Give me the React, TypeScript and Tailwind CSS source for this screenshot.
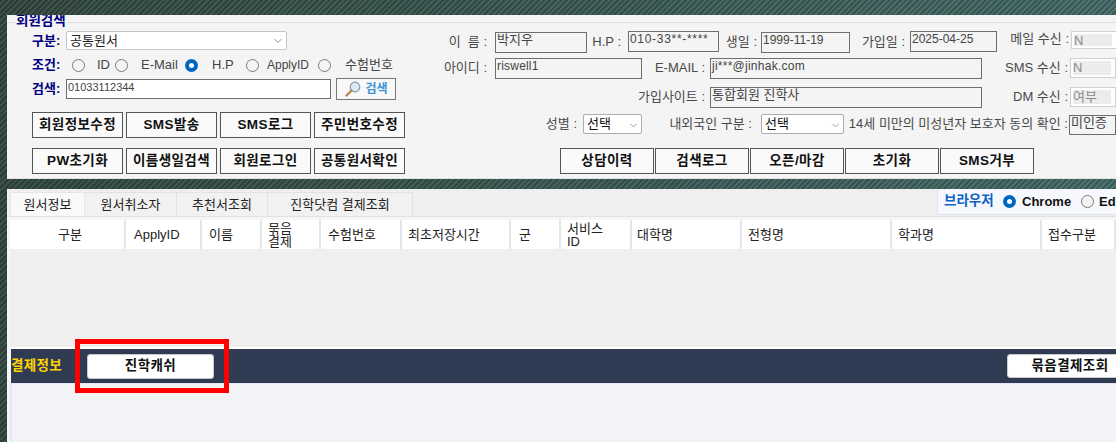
import { ChevronDown } from 'lucide-react';
import type { ReactNode } from 'react';

const FONT = 'font-["Liberation_Sans","Noto_Sans_CJK_KR",sans-serif]';

const Label = ({ className, children }: { className: string; children: ReactNode }) => (
    <div className={`shrink-0 whitespace-nowrap pt-[2px] text-right text-[13px] leading-[16px] text-[#4a4a4a] ${className}`}>{children}</div>
);

const Box = ({ className, children }: { className: string; children: ReactNode }) => (
    <div className={`shrink-0 overflow-hidden whitespace-nowrap border border-[#6e6e6e] pl-[1px] leading-[14px] text-[#444] ${className}`}>{children}</div>
);

const OffBox = ({ className, children }: { className: string; children: ReactNode }) => (
    <div className={`w-[46px] shrink-0 border border-[#cfcfcf] bg-white py-[2px] pl-[2px] ${className}`}>
        <div className="h-full w-[38px] bg-[#ececec] text-[13px] leading-[14px] text-[#8a8a8a]">{children}</div>
    </div>
);

const SmallSelect = ({ className, children }: { className: string; children: ReactNode }) => (
    <div className={`flex shrink-0 items-start justify-between rounded-[2px] border border-[#adadad] bg-white pl-[3px] pr-[2px] text-[13px] leading-[17px] text-[#111] ${className}`}>
        {children}
        <ChevronDown className="mt-[5px] h-[11px] w-[11px] text-[#777]" strokeWidth={1.5} />
    </div>
);

const ActionButton = ({ className, children }: { className: string; children: ReactNode }) => (
    <div className={`flex h-[26px] shrink-0 items-center justify-center border border-[#555] bg-[#fafafa] text-[13.5px] font-bold tracking-[0.4px] text-[#111] ${className}`}>
        {children}
    </div>
);

const Radio = ({ on = false, className = '' }: { on?: boolean; className?: string }) =>
    on ? (
        <span className={`flex h-[13px] w-[13px] shrink-0 items-center justify-center rounded-full bg-[#0067c0] ${className}`}>
            <span className="h-[5px] w-[5px] rounded-full bg-white" />
        </span>
    ) : (
        <span className={`h-[13px] w-[13px] shrink-0 rounded-full border border-[#7a7a7a] bg-[#f4f4f4] ${className}`} />
    );

const Navy = ({ children }: { children: ReactNode }) => <div className="w-[34px] shrink-0 text-[13px] font-bold leading-[16px] text-[#000080]">{children}</div>;

const COLUMNS: { name: ReactNode; cls: string }[] = [
    { name: '구분', cls: 'justify-center pl-[6px]' },
    { name: 'ApplyID', cls: 'pl-[8px] text-[12px]' },
    { name: '이름', cls: 'pl-[7px]' },
    { name: <>묶음<br />결제</>, cls: 'pl-[6px]' },
    { name: '수험번호', cls: 'pl-[7px]' },
    { name: '최초저장시간', cls: 'pl-[6px]' },
    { name: '군', cls: 'pl-[8px]' },
    { name: <>서비스<br />ID</>, cls: 'pl-[6px]' },
    { name: '대학명', cls: 'pl-[5px]' },
    { name: '전형명', cls: 'pl-[6px]' },
    { name: '학과명', cls: 'pl-[6px]' },
    { name: '접수구분', cls: 'pl-[6px]' },
];

const App = () => {
    return (
        <div className={`relative h-[442px] w-[1116px] overflow-hidden bg-[repeating-linear-gradient(135deg,rgba(0,0,0,0.16)_0px,rgba(0,0,0,0.16)_2px,rgba(255,255,255,0.05)_2px,rgba(255,255,255,0.05)_4px),linear-gradient(90deg,#32483f,#456b68)] pl-[7px] pt-[15px] ${FONT}`}>
            {/* 회원검색 */}
            <div className="relative h-[164px] w-[1109px] overflow-hidden border-b border-[#e2e2e2] bg-[#f4f4f4]">
                <div className="absolute left-[9px] top-[-1px] bg-[#f4f4f4] pr-[2px] text-[13.5px] font-bold leading-[14px] text-[#000080]">회원검색</div>
                <div className="mt-[7px] flex border-t border-[#dddddd] pt-[8px]">
                    {/* left */}
                    <div className="w-[413px] shrink-0 pl-[25px]">
                        <div className="flex items-center">
                            <Navy>구분:</Navy>
                            <div className="flex h-[19px] w-[221px] items-center justify-between rounded-[2px] border border-[#c4c4c4] bg-white pl-[3px] pr-[2px] text-[13px] text-[#222]">
                                공통원서
                                <ChevronDown className="h-[12px] w-[12px] text-[#666]" strokeWidth={1.5} />
                            </div>
                        </div>
                        <div className="mt-[6px] flex h-[18px] items-center whitespace-nowrap text-[13px] text-[#444]">
                            <Navy>조건:</Navy>
                            <Radio className="ml-[6px]" />
                            <span className="ml-[12px] w-[18px]">ID</span>
                            <Radio />
                            <span className="ml-[13px] w-[37px]">E-Mail</span>
                            <Radio on className="ml-[7px]" />
                            <span className="ml-[14px] w-[19px]">H.P</span>
                            <Radio className="ml-[15px]" />
                            <span className="ml-[8px] w-[40px] text-[12px]">ApplyID</span>
                            <Radio className="ml-[11px]" />
                            <span className="ml-[14px]">수험번호</span>
                        </div>
                        <div className="mt-[4px] flex h-[22px] items-center">
                            <Navy>검색:</Navy>
                            <div className="h-[20px] w-[265px] border border-[#6e6e6e] bg-white pl-[1px] text-[11px] leading-[15px] text-[#444]">01033112344</div>
                            <div className="ml-[5px] flex h-[22px] w-[60px] items-center justify-center gap-[3px] border border-[#777] bg-[#f8f8f8] text-[12px] font-bold text-[#3a94d6]">
                                <svg width="18" height="18" viewBox="0 0 18 18" fill="none">
                                    <circle cx="11" cy="7" r="4.8" fill="#dbe9f4" stroke="#8a9aa8" strokeWidth="1.2" />
                                    <path d="M7.5 10.5 2.5 15.5" stroke="#b08a4e" strokeWidth="2.4" strokeLinecap="round" />
                                </svg>
                                검색
                            </div>
                        </div>
                        <div className="mt-[12px] flex gap-[3px]">
                            <ActionButton className="w-[91px]">회원정보수정</ActionButton>
                            <ActionButton className="w-[91px]">SMS발송</ActionButton>
                            <ActionButton className="w-[91px]">SMS로그</ActionButton>
                            <ActionButton className="w-[91px]">주민번호수정</ActionButton>
                        </div>
                        <div className="mt-[10px] flex gap-[3px]">
                            <ActionButton className="w-[91px]">PW초기화</ActionButton>
                            <ActionButton className="w-[91px]">이름생일검색</ActionButton>
                            <ActionButton className="w-[91px]">회원로그인</ActionButton>
                            <ActionButton className="w-[91px]">공통원서확인</ActionButton>
                        </div>
                    </div>

                    {/* right */}
                    <div className="min-w-0 flex-1">
                        <div className="flex h-[22px] items-start">
                            <Label className="mr-[8px] mt-[1px] w-[67px]">이&nbsp;&nbsp;름 :</Label>
                            <Box className="mt-[1px] h-[21px] w-[92px] text-[13px]">박지우</Box>
                            <Label className="mr-[7px] mt-[1px] w-[34px]">H.P :</Label>
                            <Box className="h-[21px] w-[91px] text-[12px] tracking-[0.7px]">010-33**-****</Box>
                            <Label className="mr-[4px] mt-[1px] w-[38px]">생일 :</Label>
                            <Box className="mt-[1px] h-[21px] w-[89px] text-[12px]">1999-11-19</Box>
                            <Label className="mr-[5px] mt-[1px] w-[55px]">가입일 :</Label>
                            <Box className="h-[21px] w-[87px] text-[12px]">2025-04-25</Box>
                            <Label className="mr-[2px] mt-[-2px] w-[72px]">메일 수신 :</Label>
                            <OffBox className="h-[18px]">N</OffBox>
                        </div>
                        <div className="mt-[5px] flex h-[21px] items-start">
                            <Label className="mr-[8px] w-[67px]">아이디 :</Label>
                            <Box className="h-[21px] w-[147px] text-[12px] tracking-[0.2px]">riswell1</Box>
                            <Label className="mr-[5px] w-[63px]">E-MAIL :</Label>
                            <Box className="h-[21px] w-[272px] text-[12px] tracking-[0.25px]">ji***@jinhak.com</Box>
                            <Label className="mr-[2px] w-[86px]">SMS 수신 :</Label>
                            <OffBox className="h-[20px]">N</OffBox>
                        </div>
                        <div className="mt-[8px] flex h-[21px] items-start">
                            <Label className="mr-[5px] w-[285px]">가입사이트 :</Label>
                            <Box className="h-[21px] w-[272px] text-[13px]">통합회원 진학사</Box>
                            <Label className="mr-[2px] w-[86px]">DM 수신 :</Label>
                            <OffBox className="h-[20px]">여부</OffBox>
                        </div>
                        <div className="mt-[6px] flex h-[21px] items-start">
                            <Label className="mr-[6px] w-[157px]">성별 :</Label>
                            <SmallSelect className="h-[20px] w-[59px]">선택</SmallSelect>
                            <Label className="mr-[9px] w-[110px]">내외국인 구분 :</Label>
                            <SmallSelect className="h-[20px] w-[83px]">선택</SmallSelect>
                            <Label className="mr-[1px] w-[224px]">14세 미만의 미성년자 보호자 동의 확인 :</Label>
                            <Box className="mt-[1px] h-[20px] w-[47px] text-[13px]">미인증</Box>
                        </div>
                        <div className="mt-[13px] flex gap-[1px] pl-[140px]">
                            <ActionButton className="w-[94px]">상담이력</ActionButton>
                            <ActionButton className="w-[94px]">검색로그</ActionButton>
                            <ActionButton className="w-[94px]">오픈/마감</ActionButton>
                            <ActionButton className="w-[94px]">초기화</ActionButton>
                            <ActionButton className="w-[94px]">SMS거부</ActionButton>
                        </div>
                    </div>
                </div>
            </div>

            {/* 원서정보 */}
            <div className="mt-[10px] flex h-[253px] w-[1109px] flex-col bg-[#f4f4f4]">
                <div className="flex h-[27px] shrink-0 items-start justify-between bg-[#efefef] pl-[3px]">
                    <div className="mt-[3px] flex h-[24px] whitespace-nowrap text-[13px] text-[#222]">
                        <div className="flex w-[75px] items-center justify-center border-x border-t border-[#e6e6e6] bg-[#f9f9f9]">원서정보</div>
                        <div className="flex w-[92px] items-center justify-center border-r border-t border-[#e2e2e2] bg-[#f1f1f1]">원서취소자</div>
                        <div className="flex w-[91px] items-center justify-center border-r border-t border-[#e2e2e2] bg-[#f1f1f1]">추천서조회</div>
                        <div className="flex w-[145px] items-center justify-center border-r border-t border-[#e2e2e2] bg-[#f1f1f1]">진학닷컴 결제조회</div>
                    </div>
                    <div className="flex h-[26px] w-[179px] items-center whitespace-nowrap border-b border-l border-[#e0e4ef] bg-[#f6f8fd] pl-[6px] text-[13px] font-bold">
                        <span className="w-[59px] shrink-0 text-[13.5px] text-[#0b62c4]">브라우저</span>
                        <Radio on />
                        <span className="ml-[6px] w-[49px] shrink-0 text-[#111]">Chrome</span>
                        <Radio className="ml-[10px]" />
                        <span className="ml-[5px] shrink-0 text-[#111]">Ed</span>
                    </div>
                </div>
                <div className="h-[4px] shrink-0 border-t border-[#e2e2e2] bg-[#f6f6f6]" />
                <div className="ml-[3px] grid h-[29px] shrink-0 grid-cols-[116px_76px_60px_59px_81px_109px_50px_71px_110px_150px_150px_74px] bg-white">
                    {COLUMNS.map((col, i) => (
                        <div key={i} className={`flex items-center border-r-2 border-[#e6e6e6] text-[13px] leading-[13px] text-[#222] ${col.cls}`}>
                            <div>{col.name}</div>
                        </div>
                    ))}
                </div>
                <div className="ml-[3px] h-[98px] shrink-0 bg-[#efefef]" />
                <div className="ml-[3px] h-[2px] shrink-0 bg-white" />
                <div className="ml-[4px] flex h-[34px] shrink-0 items-center justify-between bg-[#2f3b52]">
                    <div className="flex items-center">
                        <span className="w-[76px] whitespace-nowrap text-[13.5px] font-bold tracking-[0.3px] text-[#ffd400]">결제정보</span>
                        <div className="flex h-[25px] w-[127px] items-center justify-center rounded-[3px] border border-[#c9c9c9] bg-white text-[13.5px] font-bold tracking-[0.4px] text-[#111]">진학캐쉬</div>
                    </div>
                    <div className="mr-[-17px] flex h-[24px] w-[126px] shrink-0 items-center justify-center rounded-[3px] border border-[#c9c9c9] bg-white text-[13.5px] font-bold tracking-[0.4px] text-[#111]">묶음결제조회</div>
                </div>
                <div className="ml-[3px] flex-1 border-l-2 border-t border-[#e6e6f6] bg-[#f2f3f7]" />
            </div>

            {/* 강조 표시 */}
            <div className="absolute left-[75px] top-[339px] h-[54px] w-[154px] border-[5px] border-[#ff0000]" />
        </div>
    );
};

export default App;
